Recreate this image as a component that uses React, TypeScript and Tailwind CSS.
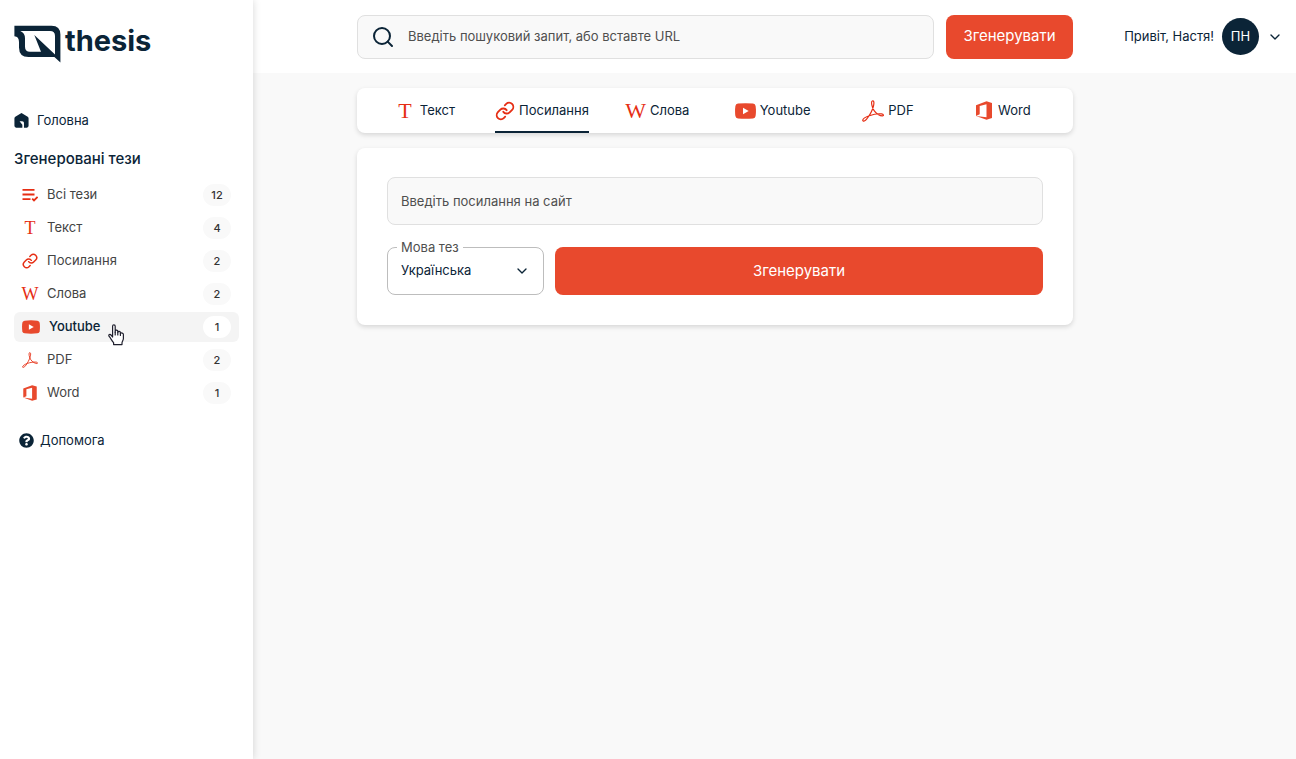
import React from 'react';
import { ChevronDown, Search } from 'lucide-react';
import { FaQuestionCircle } from 'react-icons/fa';

type IconProps = { className?: string };

const Logo = () => (
  <svg viewBox="0 0 47 38" className="w-[47px] h-[38px] shrink-0" fill="#0B2437" aria-hidden="true">
    <path
      fillRule="evenodd"
      d="M.4.7H37.5Q46.4.7 46.4 9.6V37.4L40.4 32H14.5Q5 32 5 22.5V17Q5 11.5.4 11.2ZM6.3 6Q11 8 11 13.3V21.7Q11 26.7 16 26.7H27L20.3 10L41 29.5V11Q41 6 36 6Z"
    />
  </svg>
);

const HomeIcon = ({ className }: IconProps) => (
  <svg viewBox="0 0 14 14" className={className} fill="#0B2437" aria-hidden="true">
    <path fillRule="evenodd" d="M7 0 12.8 3.6Q13.6 4.2 13.6 5V12Q13.6 13.7 12 13.7H9.3V9.2Q9.3 7.6 7.6 7.6H5.2L7.8 11V13.7H2Q.4 13.7 .4 12V5Q.4 4.2 1.2 3.6Z" />
  </svg>
);

const ListIcon = ({ className }: IconProps) => (
  <svg viewBox="0 0 16 14" className={className} fill="none" stroke="#E62E14" strokeWidth="1.8" aria-hidden="true">
    <path d="M.5 1.9H12.5M.5 6.5H12.5M.5 11.2H8.5M10.2 10.6 12 12.4 15.6 8.8" />
  </svg>
);

const LinkIcon = ({ className }: IconProps) => (
  <svg viewBox="0 0 24 24" className={className} fill="none" stroke="#E62E14" strokeWidth="2.2" strokeLinecap="round" strokeLinejoin="round" aria-hidden="true">
    <path d="M10 13a5 5 0 0 0 7.54.54l3-3a5 5 0 0 0-7.07-7.07l-1.72 1.71" />
    <path d="M14 11a5 5 0 0 0-7.54-.54l-3 3a5 5 0 0 0 7.07 7.07l1.71-1.71" />
  </svg>
);

const YoutubeIcon = ({ className }: IconProps) => (
  <svg viewBox="0 0 21 16" className={className} aria-hidden="true">
    <path fill="#E8492D" d="M3 .6Q10.5-.2 18 .6Q20.3.9 20.6 3Q21.3 8 20.6 13Q20.3 15.1 18 15.4Q10.5 16.2 3 15.4Q.7 15.1.4 13Q-.3 8 .4 3Q.7.9 3 .6Z" />
    <path fill="#fff" d="M8 4.8V11.2L13.7 8Z" />
  </svg>
);

const PdfIcon = ({ className }: IconProps) => (
  <svg viewBox="0 0 22 22" className={className} fill="none" stroke="#E62E14" strokeWidth="1.2" strokeLinejoin="round" aria-hidden="true">
    <path d="M10.3 1C12 .4 12.3 2.800 11.400 6.300C10.400 10.200 7.400 15.600 4.600 19.200C3.200 21 1.100 21.700.8 20.700C.5 19.300 3.600 17 7.300 15.700C11.300 14.300 16.300 13.500 19.500 13.900C21.700 14.200 22 15.800 20.400 15.900C18.100 16 14.200 13.600 12.100 10.600C10.200 8 8.700 1.700 10.300 1Z" />
  </svg>
);

const OfficeIcon = ({ className }: IconProps) => (
  <svg viewBox="0 0 16 19" className={className} fill="#E8492D" aria-hidden="true">
    <path fillRule="evenodd" d="M0 4.2 10.5.3 16 1.9V17.1L10.5 18.7 0 14.9 10.5 16.2V3.2L3.7 4.9V13.3L0 14.9Z" />
  </svg>
);

const HandCursor = ({ className }: IconProps) => (
  <svg viewBox="0 0 17 22" className={className} fill="#fff" stroke="#20202E" strokeWidth="1.2" strokeLinejoin="round" strokeLinecap="round" aria-hidden="true">
    <path d="M4.6 13V2.3C4.6.3 7.2.3 7.2 2.3V8.2V6.8C7.6 5.6 9.7 5.9 9.8 7.2V8.2C10.3 7 12.3 7.3 12.4 8.6V9.5C13.2 8.5 15.4 9 15.4 10.6V14.5C15.4 16.5 14 17.5 14 19V20.6H5.6V18.7C4.500 17.5 3.5 15.8 2.5 14.2L1 12.2C.3 10.7 2 9.8 3 11Z" />
    <path d="M7.2 8V11M9.8 8V11M12.4 9.5V11.5" />
  </svg>
);

const items = [
  {
    label: 'Текст',
    count: 4,
    small: <span className="w-4 text-center font-['Liberation_Serif',serif] text-[18px] leading-none text-[#E62E14]">T</span>,
    large: <span className="font-['Liberation_Serif',serif] text-[22px] leading-none text-[#E62E14]">T</span>,
    gap: 'gap-2',
  },
  {
    label: 'Посилання',
    count: 2,
    small: <LinkIcon className="w-4 h-4" />,
    large: <LinkIcon className="w-5 h-5" />,
    gap: 'gap-1',
  },
  {
    label: 'Слова',
    count: 2,
    small: <span className="w-4 flex justify-center font-['Liberation_Serif',serif] text-[18px] leading-none text-[#E62E14]">W</span>,
    large: <span className="font-['Liberation_Serif',serif] text-[22px] leading-none text-[#E62E14]">W</span>,
    gap: 'gap-1',
  },
  {
    label: 'Youtube',
    count: 1,
    small: <YoutubeIcon className="w-[18px] h-[14px]" />,
    large: <YoutubeIcon className="w-[21px] h-4" />,
    gap: 'gap-1',
  },
  {
    label: 'PDF',
    count: 2,
    small: <PdfIcon className="w-4 h-4" />,
    large: <PdfIcon className="w-[22px] h-[22px]" />,
    gap: 'gap-1',
  },
  {
    label: 'Word',
    count: 1,
    small: <OfficeIcon className="w-4 h-4" />,
    large: <OfficeIcon className="w-4 h-[19px]" />,
    gap: 'gap-1.5',
  },
];

type SidebarItemProps = { label: string; count: number; icon: React.ReactNode; active?: boolean };

const SidebarItem = ({ label, count, icon, active }: SidebarItemProps) => (
  <li className="relative">
    <a
      href="#"
      className={`h-[30px] flex items-center gap-[9px] rounded-md px-2 text-[13px] ${active ? 'bg-[#F4F4F4] font-medium' : 'text-[#444]'}`}
    >
      {icon}
      {label}
      <span
        className={`ml-auto w-7 h-[22px] flex items-center justify-center rounded-full text-[11px] font-medium text-[#333] ${active ? 'bg-white' : 'bg-[#F9F9F9]'}`}
      >
        {count}
      </span>
    </a>
    {active && <HandCursor className="absolute left-[94px] top-3 w-[17px] h-[22px]" />}
  </li>
);

const Sidebar = () => (
  <aside className="relative z-10 w-[253px] shrink-0 bg-white px-[14px] shadow-[0_0_8px_rgba(0,0,0,0.16)]">
    <a href="#" className="mt-[25px] flex items-start gap-1 text-[#0B2437]">
      <Logo />
      <span className="text-[29px] leading-8 font-bold">thesis</span>
    </a>
    <a href="#" className="mt-[47px] flex items-center gap-2 text-[13px] leading-5">
      <HomeIcon className="w-[15px] h-[15px]" />
      Головна
    </a>
    <h2 className="mt-[19px] text-[15px] leading-5 font-medium">Згенеровані тези</h2>
    <ul className="mt-[11px] flex flex-col gap-[3px]">
      <SidebarItem label="Всі тези" count={12} icon={<ListIcon className="w-4 h-[14px]" />} />
      {items.map((item) => (
        <SidebarItem key={item.label} label={item.label} count={item.count} icon={item.small} active={item.label === 'Youtube'} />
      ))}
    </ul>
    <a href="#" className="mt-[22px] ml-[5px] flex items-center gap-1.5 text-[13px] leading-5">
      <FaQuestionCircle className="w-[15px] h-[15px]" />
      Допомога
    </a>
  </aside>
);

const Header = () => (
  <header className="h-[73px] flex items-center bg-white pl-[104px] pr-[13px]">
    <div className="flex-1 max-w-[716px] flex gap-3">
      <label className="flex-1 h-11 flex items-center gap-[13px] rounded-lg border border-[#E0E0E0] bg-[#F9F9F9] px-[13px]">
        <Search className="w-6 h-6" strokeWidth={2} />
        <input
          type="text"
          aria-label="Пошук"
          placeholder="Введіть пошуковий запит, або вставте URL"
          className="flex-1 min-w-0 bg-transparent text-[13px] outline-none placeholder:text-[#4F4F4F]"
        />
      </label>
      <button className="h-11 w-[127px] rounded-lg bg-[#E8492D] text-[15px] text-white">Згенерувати</button>
    </div>
    <button className="ml-auto flex items-center gap-2 text-[13px]">
      Привіт, Настя!
      <span className="w-[37px] h-[37px] flex items-center justify-center rounded-full bg-[#0B2437] text-white">ПН</span>
      <ChevronDown className="w-4 h-4" />
    </button>
  </header>
);

const Tabs = () => (
  <nav className="h-[45px] grid grid-cols-6 justify-items-center rounded-lg bg-white px-3 shadow-[0_2px_5px_rgba(0,0,0,0.14)]">
    {items.map((item) => (
      <a
        key={item.label}
        href="#"
        className={`flex items-center text-[13px] border-y-2 border-t-transparent ${item.gap} ${item.label === 'Посилання' ? 'border-b-[#0B2437]' : 'border-b-transparent'}`}
      >
        {item.large}
        {item.label}
      </a>
    ))}
  </nav>
);

const LinkForm = () => (
  <form className="rounded-lg bg-white px-[30px] pt-[29px] pb-[30px] shadow-[0_2px_5px_rgba(0,0,0,0.14)]">
    <input
      type="text"
      aria-label="Посилання"
      placeholder="Введіть посилання на сайт"
      className="block w-full h-12 rounded-lg border border-[#E0E0E0] bg-[#F9F9F9] px-[13px] text-[13px] outline-none placeholder:text-[#4F4F4F]"
    />
    <div className="mt-[22px] flex gap-[11px]">
      <div className="relative w-[157px]">
        <label htmlFor="lang" className="absolute left-[10px] -top-2 bg-white px-1 text-[13px] leading-4 text-[#4F4F4F]">
          Мова тез
        </label>
        <select id="lang" className="w-full h-12 appearance-none rounded-lg border border-[#BDBDBD] bg-white px-[13px] text-[13px] outline-none">
          <option>Українська</option>
        </select>
        <ChevronDown className="pointer-events-none absolute right-[14px] top-4 w-4 h-4" />
      </div>
      <button type="button" className="flex-1 h-12 rounded-lg bg-[#E8492D] text-[15px] text-white">
        Згенерувати
      </button>
    </div>
  </form>
);

const App = () => {
  return (
    <div className="min-h-screen flex bg-[#F9F9F9] font-['Inter',sans-serif] text-[#0B2437]">
      <Sidebar />
      <div className="flex-1 min-w-0">
        <Header />
        <main className="pl-[104px] pr-4 pt-[15px]">
          <div className="max-w-[716px] flex flex-col gap-[15px]">
            <Tabs />
            <LinkForm />
          </div>
        </main>
      </div>
    </div>
  );
};

export default App;
